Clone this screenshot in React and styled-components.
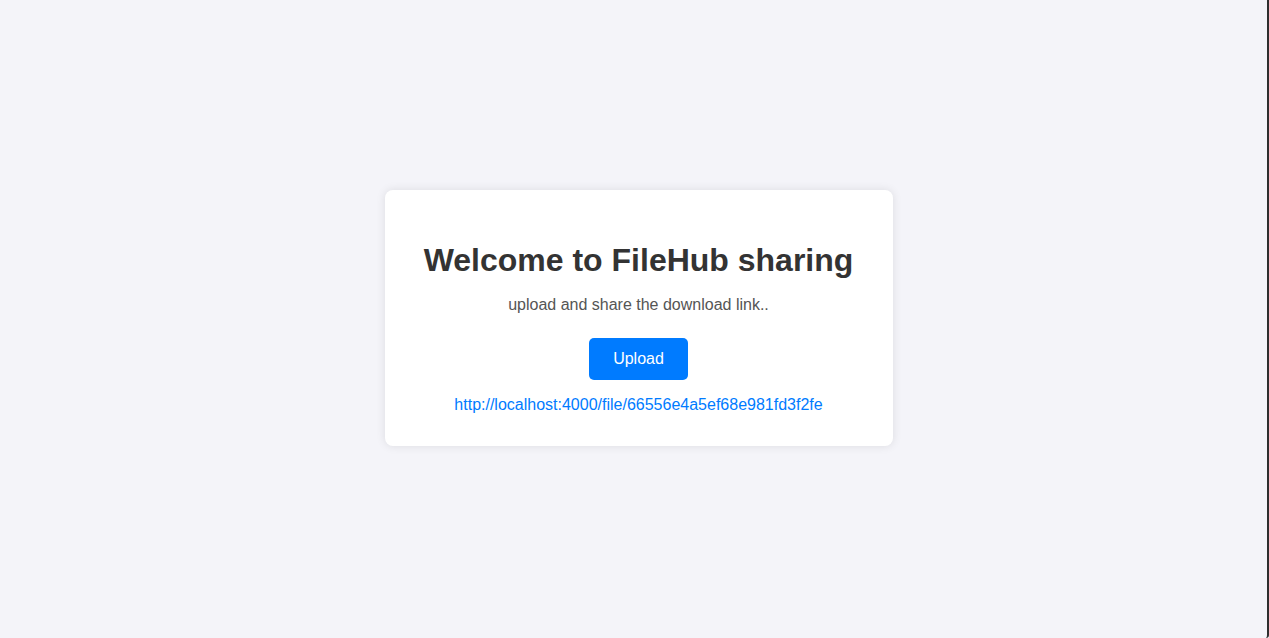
import React from "react";
import styled, { createGlobalStyle } from "styled-components";

const GlobalStyle = createGlobalStyle`
  html, body {
    margin: 0;
    padding: 0;
  }
  body {
    font-family: "Liberation Sans", Arial, sans-serif;
    background-color: #f4f4f9;
  }
`;

const Page = styled.div`
  display: flex;
  align-items: center;
  justify-content: center;
  min-height: 100vh;
  padding: 0 0 3px 10px;
  box-sizing: border-box;
  background-color: #f4f4f9;
  border-right: 2px solid #2e2e2e;
  border-bottom-right-radius: 3px;
`;

const Card = styled.div`
  width: 508px;
  padding: 32px;
  box-sizing: border-box;
  background-color: #fff;
  border-radius: 8px;
  box-shadow: 0 0 10px rgba(0, 0, 0, 0.1);
  text-align: center;
`;

const Title = styled.h1`
  margin: 20px 0 17px;
  font-size: 32px;
  font-weight: bold;
  color: #333;
`;

const Subtitle = styled.p`
  margin: 0 0 24px;
  font-size: 16px;
  color: #555;
`;

const UploadButton = styled.button`
  padding: 12px 24px;
  border: none;
  border-radius: 5px;
  background-color: #007bff;
  color: #fff;
  font-family: inherit;
  font-size: 16px;
  line-height: normal;
  cursor: pointer;
`;

const FileLink = styled.a`
  display: block;
  margin-top: 16px;
  font-size: 16px;
  color: #007bff;
  text-decoration: none;
`;

const App = () => {
  const fileUrl = "http://localhost:4000/file/66556e4a5ef68e981fd3f2fe";

  return (
    <>
      <GlobalStyle />
      <Page>
        <Card>
          <Title>Welcome to FileHub sharing</Title>
          <Subtitle>upload and share the download link..</Subtitle>
          <UploadButton>Upload</UploadButton>
          <FileLink href={fileUrl}>{fileUrl}</FileLink>
        </Card>
      </Page>
    </>
  );
};

export default App;
